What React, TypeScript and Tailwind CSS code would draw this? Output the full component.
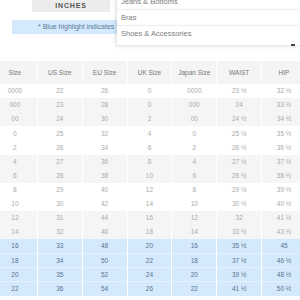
const rows = [
  ["0000", "22", "26", "0", "0000", "23 ½", "32 ½"],
  ["000", "23", "28", "0", "000", "24", "33 ½"],
  ["00", "24", "30", "2", "00", "24 ½", "34 ½"],
  ["0", "25", "32", "4", "0", "25 ½", "35 ½"],
  ["2", "26", "34", "6", "2", "26 ½", "36 ½"],
  ["4", "27", "36", "8", "4", "27 ½", "37 ½"],
  ["6", "28", "38", "10", "6", "28 ½", "38 ½"],
  ["8", "29", "40", "12", "8", "29 ½", "39 ½"],
  ["10", "30", "42", "14", "10", "30 ½", "40 ½"],
  ["12", "31", "44", "16", "12", "32", "41 ½"],
  ["14", "32", "46", "18", "14", "33 ½", "43 ½"],
  ["16", "33", "48", "20", "16", "35 ½", "45"],
  ["18", "34", "50", "22", "18", "37 ½", "46 ½"],
  ["20", "35", "52", "24", "20", "39 ½", "48 ½"],
  ["22", "36", "54", "26", "22", "41 ½", "50 ½"],
];

const headers = ["Size", "US Size", "EU Size", "UK Size", "Japan Size", "WAIST", "HIP"];

function rowClass(i: number) {
  if (i >= 11) return "bg-[#d4e9fc] text-[#5a7391]";
  const gray = [1, 2, 5, 6, 9, 10].includes(i);
  return gray ? "bg-[#f5f5f5] text-[#aaaaaa]" : "bg-white text-[#aaaaaa]";
}

export default function App() {
  return (
    <div className="relative h-[300px] w-[300px] overflow-hidden bg-white font-['Liberation_Sans',Arial,sans-serif]">
      <div className="flex h-[61px] flex-col">
        <div className="ml-[32px] flex h-[12px] w-[78px] items-center justify-center bg-[#ececec] text-[7px] font-bold tracking-[0.12em] text-[#555]">
          INCHES
        </div>
        <div className="ml-[12px] mt-[8px] flex h-[14px] w-[118px] items-center bg-[#d4e9fc] pl-[26px] text-[7px] text-[#5b7a98]">
          * Blue highlight indicates
        </div>
      </div>

      <div className="absolute left-[117px] right-0 top-[-6px] bg-white text-[7.5px] text-[#7d7d7d] shadow-[-1px_1px_4px_rgba(0,0,0,0.15)]">
        <div className="flex h-[16px] items-center border-b border-[#eeeeee] pl-[4px]">Jeans &amp; Bottoms</div>
        <div className="flex h-[16px] items-center border-b border-[#eeeeee] pl-[4px]">Bras</div>
        <div className="flex h-[16px] items-center pl-[4px]">Shoes &amp; Accessories</div>
        <div className="h-[3px]" />
      </div>
      <div className="absolute left-[291px] top-[44px] h-[1.5px] w-[4px] bg-[#444]" />

      <table className="ml-[-8px] w-[315px] table-fixed border-collapse text-center text-[6.5px]">
        <thead>
          <tr className="h-[23px] bg-[#f4f4f4] text-[#777]">
            {headers.map((h) => (
              <th key={h} className="border-x border-white font-normal">
                {h}
              </th>
            ))}
          </tr>
        </thead>
        <tbody>
          {rows.map((r, i) => (
            <tr key={i} className={`h-[14.13px] ${rowClass(i)} ${i >= 12 ? "border-t border-[#e4f1fd]" : ""}`}>
              {r.map((c, j) => (
                <td key={j} className="border-x border-white p-0">
                  {c}
                </td>
              ))}
            </tr>
          ))}
        </tbody>
      </table>
      <div className="mt-[3px] pl-[4px] text-[7px] text-[#999]">
        * Measurements are approximate and may vary slightly by style.
      </div>
    </div>
  );
}
